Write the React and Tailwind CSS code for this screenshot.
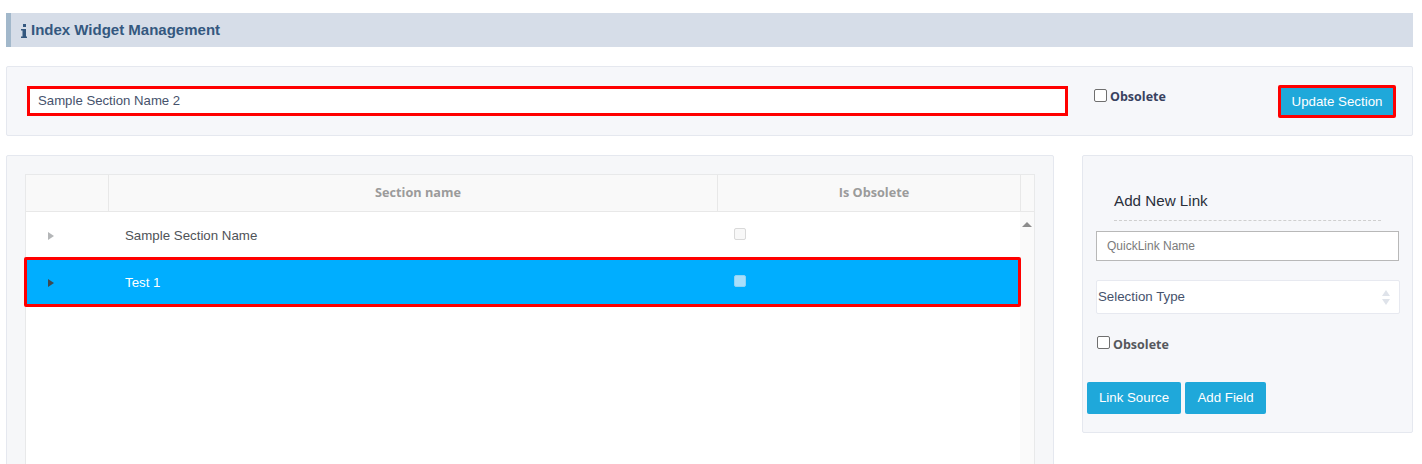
import React from 'react'

function Caret({ className }) {
    return (
        <svg width="6" height="8" viewBox="0 0 6 8" className={className}>
            <path d="M0 0 L6 4 L0 8 Z" fill="currentColor" />
        </svg>
    )
}

function Row({ name, selected }) {
    return (
        <div className={`flex h-[47px] ${selected ? 'bg-[#00aeff] text-white' : 'bg-white text-[#4f5358]'}`}>
            <div className="w-[83px] flex items-center pl-[22px] shrink-0">
                <Caret className={selected ? 'text-[#3f4a50]' : 'text-[#b4b6b8]'} />
            </div>
            <div className="w-[609px] pl-[16px] flex items-center text-[13.3px] shrink-0">{name}</div>
            <div className="flex-1 pl-[16px] pb-[3px] flex items-center">
                <span className={`block w-3 h-3 rounded-[2px] border ${selected ? 'bg-[#a9dffb] border-[#8fd3f5]' : 'bg-[#f8f8f8] border-[#d9d9d9]'}`} />
            </div>
        </div>
    )
}

function Check({ label, color }) {
    return (
        <label className="flex items-start">
            <span className="block w-[13px] h-[13px] rounded-[2px] border border-[#6f6f6f] bg-white" />
            <span className={`ml-[3px] font-['Open_Sans',sans-serif] font-bold text-[12.5px] leading-[14px] ${color}`}>{label}</span>
        </label>
    )
}

export default function App() {
    return (
        <div className="h-[464px] overflow-hidden bg-white pl-[6px] pr-[9px] pt-[13px] font-['Liberation_Sans',Arial,sans-serif]">
            <div className="h-[34px] bg-[#d6dde8] border-l-[5px] border-[#a2b8cb] flex items-center pl-[10px] text-[#34587f] font-bold text-[15px]">
                <svg width="6" height="14" viewBox="0 0 6 14" className="mr-[4px] mt-[2px]">
                    <path d="M2 0 H5 V3 H2 Z M0 5 H5 V12.5 H6 V14 H0 V12.5 H1.5 V6.5 H0 Z" fill="currentColor" />
                </svg>
                Index Widget Management
            </div>

            <div className="mt-[19px] h-[70px] bg-[#f6f7fa] border border-[#e5e8ef] rounded-[2px] flex items-start pl-[20px] pt-[19px]">
                <div className="w-[1041px] h-[30px] border-[3px] border-[#ff0000] bg-white flex items-center pl-[8px] text-[13.2px] text-[#46526c]">
                    Sample Section Name 2
                </div>
                <div className="ml-[26px] mt-[3px]">
                    <Check label="Obsolete" color="mt-[1px] text-[#38415f]" />
                </div>
                <div className="ml-auto mr-[16px] -mt-[1px] w-[118px] h-[33px] border-[3px] border-[#ff0000] rounded-[2px] bg-[#1fa8da] text-white text-[13.3px] flex items-center justify-center">
                    Update Section
                </div>
            </div>

            <div className="mt-[19px] flex items-start">
                <div className="w-[1048px] h-[320px] shrink-0 bg-[#f6f7f9] border border-[#e5e8ef] rounded-t-[2px] pt-[18px] pl-[18px] pr-[18px]">
                    <div className="w-[1010px] h-[300px] border border-[#e8e9ea] bg-white flex flex-col">
                        <div className="h-[37px] shrink-0 flex bg-[#f9f9f9] border-b border-[#e8e8e8] font-['Open_Sans',sans-serif] font-bold text-[12.7px] text-[#9b9b9b]">
                            <div className="w-[83px] shrink-0 border-r border-[#e8e8e8]" />
                            <div className="w-[609px] shrink-0 border-r border-[#e8e8e8] pl-[10px] flex items-center justify-center">Section name</div>
                            <div className="w-[303px] shrink-0 border-r border-[#e8e8e8] pl-[10px] flex items-center justify-center">Is Obsolete</div>
                            <div className="flex-1" />
                        </div>
                        <div className="flex flex-1">
                            <div className="w-[994px] shrink-0">
                                <Row name="Sample Section Name" />
                                <div className="relative">
                                    <Row name="Test 1" selected />
                                    <div className="absolute -left-[2px] -right-[1px] -top-[2px] -bottom-[1px] border-[3px] border-[#ff0000] rounded-[2px]" />
                                </div>
                            </div>
                            <div className="flex-1 bg-[#fafafa] flex justify-center pt-[10px]">
                                <svg width="10" height="5" viewBox="0 0 10 5">
                                    <path d="M5 0 L10 5 L0 5 Z" fill="#8c8c8c" />
                                </svg>
                            </div>
                        </div>
                    </div>
                </div>

                <div className="ml-[28px] flex-1 h-[278px] bg-[#f6f7fa] border border-[#e5e8ef] rounded-[2px] pl-[4px] pr-[13px]">
                    <div className="ml-[27px] mt-[36px] w-[267px] h-[29px] border-b border-dashed border-[#cfcfcf] text-[#2a2f3a] text-[15.2px] leading-[18px]">
                        Add New Link
                    </div>
                    <div className="ml-[9px] mt-[10px] h-[30px] border border-[#b8b8b8] bg-white flex items-center pl-[10px] text-[12px] text-[#7b7b7b]">
                        QuickLink Name
                    </div>
                    <div className="ml-[9px] mt-[19px] -mr-[1px] h-[34px] bg-white border border-[#e7e9f0] rounded-[2px] flex items-center justify-between pl-[1px] pr-[9px] text-[13.3px] text-[#46526c]">
                        Selection Type
                        <svg width="8" height="15" viewBox="0 0 8 15">
                            <path d="M4 0 L8 6 L0 6 Z M4 15 L0 9 L8 9 Z" fill="#dfe3ea" />
                        </svg>
                    </div>
                    <div className="ml-[10px] mt-[22px]">
                        <Check label="Obsolete" color="mt-[2px] text-[#55575c]" />
                    </div>
                    <div className="mt-[30px] flex gap-[4px]">
                        <div className="w-[94px] h-[32px] rounded-[2px] bg-[#1fa8da] text-white text-[13.3px] flex items-center justify-center">Link Source</div>
                        <div className="w-[81px] h-[32px] rounded-[2px] bg-[#1fa8da] text-white text-[13.3px] flex items-center justify-center">Add Field</div>
                    </div>
                </div>
            </div>
        </div>
    )
}
